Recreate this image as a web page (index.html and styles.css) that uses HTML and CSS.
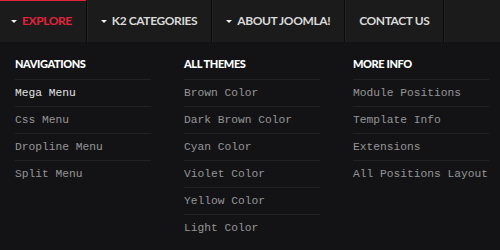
FILE: index.html
```html
<!DOCTYPE html>
<html lang="en">
<head>
    <meta charset="UTF-8">
    <title>Mega Menu</title>
    <link rel="stylesheet" href="styles.css">
</head>
<body>
<div class="menu">
    <ul class="nav">
        <li class="active"><a href="#"><span class="caret"></span>Explore</a></li>
        <li><a href="#"><span class="caret"></span>K2 Categories</a></li>
        <li><a href="#"><span class="caret"></span>About Joomla!</a></li>
        <li><a href="#">Contact Us</a></li>
    </ul>
    <div class="drop">
        <div class="col">
            <h3>Navigations</h3>
            <ul>
                <li class="current"><a href="#">Mega Menu</a></li>
                <li><a href="#">Css Menu</a></li>
                <li><a href="#">Dropline Menu</a></li>
                <li><a href="#">Split Menu</a></li>
            </ul>
        </div>
        <div class="col">
            <h3>All Themes</h3>
            <ul>
                <li><a href="#">Brown Color</a></li>
                <li><a href="#">Dark Brown Color</a></li>
                <li><a href="#">Cyan Color</a></li>
                <li><a href="#">Violet Color</a></li>
                <li><a href="#">Yellow Color</a></li>
                <li><a href="#">Light Color</a></li>
            </ul>
        </div>
        <div class="col">
            <h3>More Info</h3>
            <ul>
                <li><a href="#">Module Positions</a></li>
                <li><a href="#">Template Info</a></li>
                <li><a href="#">Extensions</a></li>
                <li><a href="#">All Positions Layout</a></li>
            </ul>
        </div>
    </div>
</div>
</body>
</html>
```

FILE: styles.css
```css
@charset "UTF-8";
/* reset */
body,h3,ul,li{margin:0;padding:0}
ul{list-style:none}
a{text-decoration:none}
body{background:#131316;}

.menu{
    width:500px;
    height:250px;
    background:#131316;
}

/* top bar */
.nav{
    display:flex;
    height:42px;
    background:#1b1b1c;
}
.nav li{
    border-right:1px solid #0b0b0b;
    box-shadow:1px 0 0 #232324;
}
.nav a{
    display:flex;
    align-items:center;
    height:42px;
    padding:0 14px;
    font:bold 12px/42px Lato, "Liberation Sans", sans-serif;
    letter-spacing:-0.4px;
    text-transform:uppercase;
    color:#d9d9d9;
}
.nav li:first-child a{
    padding-left:11px;
}
.nav .active{
    box-shadow:inset 0 1px 0 #e3223b, 1px 0 0 #232324;
}
.nav .active a{
    color:#e3223b;
}
.caret{
    width:0;
    height:0;
    border-left:3px solid transparent;
    border-right:3px solid transparent;
    border-top:3px solid #eee;
    margin-right:5px;
}

/* dropdown */
.drop{
    display:grid;
    grid-template-columns:169px 169px 162px;
    padding:14px 0 0 15px;
}
.col h3{
    font:900 11px/16px Lato, "Liberation Sans", sans-serif;
    letter-spacing:-0.4px;
    text-transform:uppercase;
    color:#fff;
    margin-bottom:7px;
}
.col ul{
    width:136px;
}
.col li{
    border-top:1px solid #222226;
}
.col li a{
    display:block;
    font:11.25px/26px "Liberation Mono", "Courier New", monospace;
    color:#959595;
    white-space:nowrap;
}
.col .current a{
    color:#e2e2e2;
}
```
